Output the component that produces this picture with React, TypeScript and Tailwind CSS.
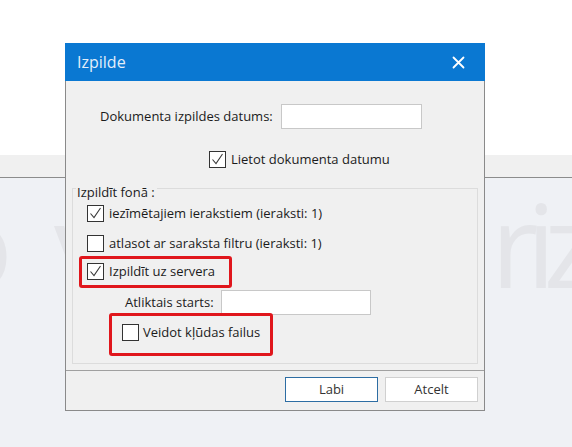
import React from "react";

const font = { fontFamily: '"Open Sans", "Noto Sans", "DejaVu Sans", sans-serif' };

function Box({ checked }: { checked?: boolean }) {
  return (
    <span className="inline-flex h-[17px] w-[17px] shrink-0 items-center justify-center border border-[#333333] bg-white">
      {checked && (
        <svg width="15" height="15" viewBox="0 0 15 15">
          <polyline points="2.5,7.5 6,11.5 12.5,2" fill="none" stroke="#3a3a3a" strokeWidth="1.1" />
        </svg>
      )}
    </span>
  );
}

export default function App() {
  return (
    <div className="relative h-[447px] w-[572px] overflow-hidden bg-white text-[13px] leading-[17px] text-[#1b1b1b]" style={font}>
      {/* background page */}
      <div className="flex h-full flex-col">
        <div className="h-[155px] bg-white" />
        <div className="h-[23px] border-b border-[#8c8c8c] bg-[#f0f0f0]" />
        <div className="relative flex-1 bg-[#eff1f5]">
          <span className="absolute left-[-57px] top-[7px] select-none text-[116px] leading-none text-[#e4e5e9]">o</span>
          <span className="absolute left-[54px] top-[7px] select-none text-[116px] leading-none text-[#e4e5e9]">v</span>
          <span className="absolute left-[491px] top-[7px] select-none text-[116px] leading-none tracking-[-12px] text-[#e4e5e9]">riz</span>
        </div>
      </div>

      {/* dialog */}
      <div className="absolute left-[65px] top-[43px] flex h-[368px] w-[420px] flex-col border border-t-0 border-[#8a8a8a] bg-[#f0f0f0]">
        <div className="-mx-px flex h-[38px] items-center justify-between bg-[#0a78d2] pl-[12px] pr-[20px]">
          <span className="text-[16px] leading-[20px] text-[#e2eefa]">Izpilde</span>
          <svg width="13" height="13" viewBox="0 0 13 13">
            <path d="M1.5 1.5 L11.5 11.5 M11.5 1.5 L1.5 11.5" stroke="#ffffff" strokeWidth="1.8" strokeLinecap="round" />
          </svg>
        </div>

        <div className="relative flex flex-1 flex-col">
          <div className="flex items-center pl-[34px] pt-[23px]">
            <span className="w-[181px]">Dokumenta izpildes datums:</span>
            <span className="h-[25px] w-[141px] border border-[#c8c8c8] bg-white" />
          </div>
          <div className="flex items-center gap-[5px] pl-[143px] pt-[22px]">
            <Box checked />
            <span>Lietot dokumenta datumu</span>
          </div>

          {/* group box */}
          <div className="relative mx-[6px] mt-[20px] h-[176px] border border-[#dcdcdc]">
            <span className="absolute left-[3px] top-[-5px] bg-[#f0f0f0] pl-px pr-[2px] leading-[16px]">Izpildīt fonā :</span>
            <div className="flex flex-col pl-[14px] pt-[16px]">
              <div className="flex items-center gap-[5px]">
                <Box checked />
                <span>iezīmētajiem ierakstiem (ieraksti: 1)</span>
              </div>
              <div className="mt-[13px] flex items-center gap-[5px]">
                <Box />
                <span>atlasot ar saraksta filtru (ieraksti: 1)</span>
              </div>
              <div className="mt-[11px] flex items-center gap-[5px]">
                <Box checked />
                <span>Izpildīt uz servera</span>
              </div>
              <div className="mt-[10px] flex items-center pl-[38px]">
                <span className="w-[96px]">Atliktais starts:</span>
                <span className="h-[25px] w-[150px] border border-[#c8c8c8] bg-white" />
              </div>
              <div className="mt-[9px] flex items-center gap-[4px] pl-[35px]">
                <Box />
                <span>Veidot kļūdas failus</span>
              </div>
            </div>
          </div>

          {/* footer */}
          <div className="mt-[6px] flex flex-1 items-start justify-end gap-[7px] border-t border-[#a0a0a0] pr-[6px] pt-[6px]">
            <span className="flex h-[25px] w-[93px] items-center justify-center border border-[#2d6da3] bg-white text-[#333]">Labi</span>
            <span className="flex h-[25px] w-[93px] items-center justify-center border border-[#d0d0d0] bg-white text-[#333]">Atcelt</span>
          </div>

          {/* red highlight annotations */}
          <span className="pointer-events-none absolute left-[13px] top-[175px] h-[32px] w-[153px] rounded-[3px] border-[3px] border-[#e0161c]" />
          <span className="pointer-events-none absolute left-[43px] top-[232px] h-[43px] w-[164px] rounded-[3px] border-[3px] border-[#e0161c]" />
        </div>
      </div>
    </div>
  );
}
